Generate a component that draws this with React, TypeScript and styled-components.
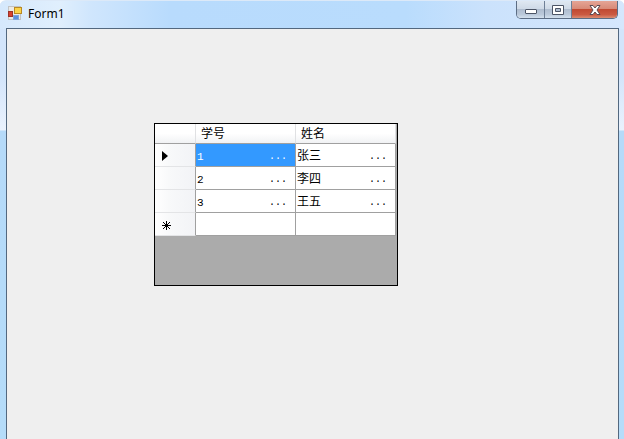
import React from "react";
import styled, { createGlobalStyle } from "styled-components";

const Global = createGlobalStyle`
  * { box-sizing: border-box; }
  html, body { margin: 0; height: 100%; }
  #root { height: 100%; }
`;

const Window = styled.div`
  display: flex;
  flex-direction: column;
  min-height: 100vh;
  padding: 0 5px 0 6px;
  background:
    linear-gradient(90deg, #d5e8fc 0, #e0effd 60px, #d0e6fd 90px, #b8dbfd 170px, #b9dcfd 65%, #cbe2fc 78%, #d5e7fd 100%) top / 100% 28px no-repeat,
    linear-gradient(180deg, #d3e5fb 0, #d3e5fb 75px, #eaf2fd 129px, #b5daf9 130px, #b5dcf9 100%);
  border-top: 1px solid #dce9f8;
  border-radius: 6px 6px 0 0;
`;

const TitleBar = styled.header`
  display: flex;
  height: 27px;
  padding-right: 1px;
`;

const Title = styled.h1`
  display: flex;
  flex: 1;
  align-items: center;
  gap: 5px;
  margin: 0;
  padding: 0 0 2px 2px;
  font: 400 12px/16px "Noto Sans", "Open Sans", sans-serif;
  color: #000;
`;

const Captions = styled.div`
  display: flex;
  height: 18px;
  border: 1px solid #5c6d84;
  border-top: 0;
  border-radius: 0 0 5px 5px;
  overflow: hidden;
`;

const CaptionButton = styled.button<{ $close?: boolean }>`
  display: grid;
  place-items: center;
  width: ${(p) => (p.$close ? 46 : 27)}px;
  padding: 0;
  border: 0;
  background: ${(p) =>
    p.$close
      ? "linear-gradient(#e5a596 0, #d88a78 45%, #c14a33 50%, #cb5a42 80%, #dc8c72 100%)"
      : "linear-gradient(#dfe8f2 0, #cfdae7 45%, #afbdcf 50%, #bccadb 80%, #d3e0ee 100%)"};
  & + & { border-left: 1px solid #6e7f96; }
`;

const Client = styled.main`
  flex: 1;
  padding: 94px 0 0 147px;
  border: 1px solid #53687f;
  border-bottom: 0;
  background: #efefef;
`;

const GridView = styled.div`
  width: 244px;
  min-height: 163px;
  border: 1px solid #000;
  background: #ababab;
`;

const Table = styled.table`
  border-collapse: separate;
  border-spacing: 0;
  table-layout: fixed;
  width: 241px;
  font: 12px/16px "Liberation Mono", "Noto Sans CJK SC", sans-serif;
  color: #000;
`;

const ColHead = styled.th<{ $width: number }>`
  width: ${(p) => p.$width}px;
  height: 20px;
  padding: 2px 0 0 5px;
  text-align: left;
  font-weight: 400;
  background: linear-gradient(#fff, #fff 50%, #f1f2f4);
  border-right: 1px solid #e0e1e3;
  border-bottom: 1px solid #a0a0a0;
`;

const RowHead = styled.th`
  height: 23px;
  padding: 2px 0 0 7px;
  text-align: left;
  background: linear-gradient(90deg, #fff 0, #f8f9fa 35%, #f2f3f6);
  border-right: 1px solid #a0a0a0;
  border-bottom: 1px solid #e3e4e6;
  svg { display: block; }
`;

const Cell = styled.td<{ $selected?: boolean }>`
  height: 23px;
  padding: 3px 8px 0 1px;
  background: ${(p) => (p.$selected ? "#3399ff" : "#fff")};
  color: ${(p) => (p.$selected ? "#fff" : "#000")};
  border-right: 1px solid #a0a0a0;
  border-bottom: 1px solid #a0a0a0;
`;

const CellText = styled.div`
  display: flex;
  justify-content: space-between;
  align-items: center;
`;

const Dots = styled.span`
  font-size: 10px;
`;

const Digit = styled.span`
  font-size: 11px;
`;

const rows = [
  { id: "1", name: "张三" },
  { id: "2", name: "李四" },
  { id: "3", name: "王五" },
];

const FormIcon = () => (
  <svg width="15" height="15" viewBox="0 0 15 15" aria-hidden="true">
    <rect x="0.5" y="0.5" width="12" height="13" fill="#eceae6" stroke="#c3c3c3" />
    <rect x="0.5" y="5.5" width="4" height="5" fill="#d8402f" stroke="#9c3328" />
    <rect x="6.5" y="1.5" width="7" height="6" fill="#fbd348" stroke="#b98a24" />
    <rect x="5.5" y="9.5" width="5" height="4" fill="#5c92e0" stroke="#7fa5dc" />
  </svg>
);

const CurrentRow = () => (
  <svg width="8" height="11" viewBox="0 0 8 11" aria-label="current row">
    <path d="M0 0 L6 5 L0 10 Z" fill="#000" />
  </svg>
);

const NewRow = () => (
  <svg width="9" height="9" viewBox="0 0 9 9" aria-label="new row">
    <path d="M4.5 0V9M0 4.5H9M1 1L8 8M8 1L1 8" stroke="#000" strokeWidth="1" />
  </svg>
);

export default function App() {
  return (
    <>
      <Global />
      <Window>
        <TitleBar>
          <Title>
            <FormIcon />
            Form1
          </Title>
          <Captions>
            <CaptionButton aria-label="Minimize">
              <svg width="12" height="10" viewBox="0 0 12 10">
                <rect x="0.5" y="4.5" width="11" height="4" rx="0.5" fill="#fff" stroke="#4c5566" />
              </svg>
            </CaptionButton>
            <CaptionButton aria-label="Maximize">
              <svg width="12" height="10" viewBox="0 0 12 10">
                <path fillRule="evenodd" d="M0.5 0.5H11.5V9.5H0.5ZM3.5 3.5V6.5H8.5V3.5Z" fill="#fff" stroke="#4c5566" />
              </svg>
            </CaptionButton>
            <CaptionButton $close aria-label="Close">
              <svg width="12" height="10" viewBox="0 0 12 10">
                <path d="M1 .5H4L6 3L8 .5H11L8 5L11 9.5H8L6 7L4 9.5H1L4 5Z" fill="#fff" stroke="#5a4a52" />
              </svg>
            </CaptionButton>
          </Captions>
        </TitleBar>
        <Client>
          <GridView>
            <Table>
              <thead>
                <tr>
                  <ColHead $width={41} aria-label="row" />
                  <ColHead $width={100}>学号</ColHead>
                  <ColHead $width={100}>姓名</ColHead>
                </tr>
              </thead>
              <tbody>
                {rows.map((r, i) => (
                  <tr key={r.id}>
                    <RowHead>{i === 0 && <CurrentRow />}</RowHead>
                    <Cell $selected={i === 0}>
                      <CellText>
                        <Digit>{r.id}</Digit>
                        <Dots>...</Dots>
                      </CellText>
                    </Cell>
                    <Cell>
                      <CellText>
                        {r.name}
                        <Dots>...</Dots>
                      </CellText>
                    </Cell>
                  </tr>
                ))}
                <tr>
                  <RowHead>
                    <NewRow />
                  </RowHead>
                  <Cell />
                  <Cell />
                </tr>
              </tbody>
            </Table>
          </GridView>
        </Client>
      </Window>
    </>
  );
}
